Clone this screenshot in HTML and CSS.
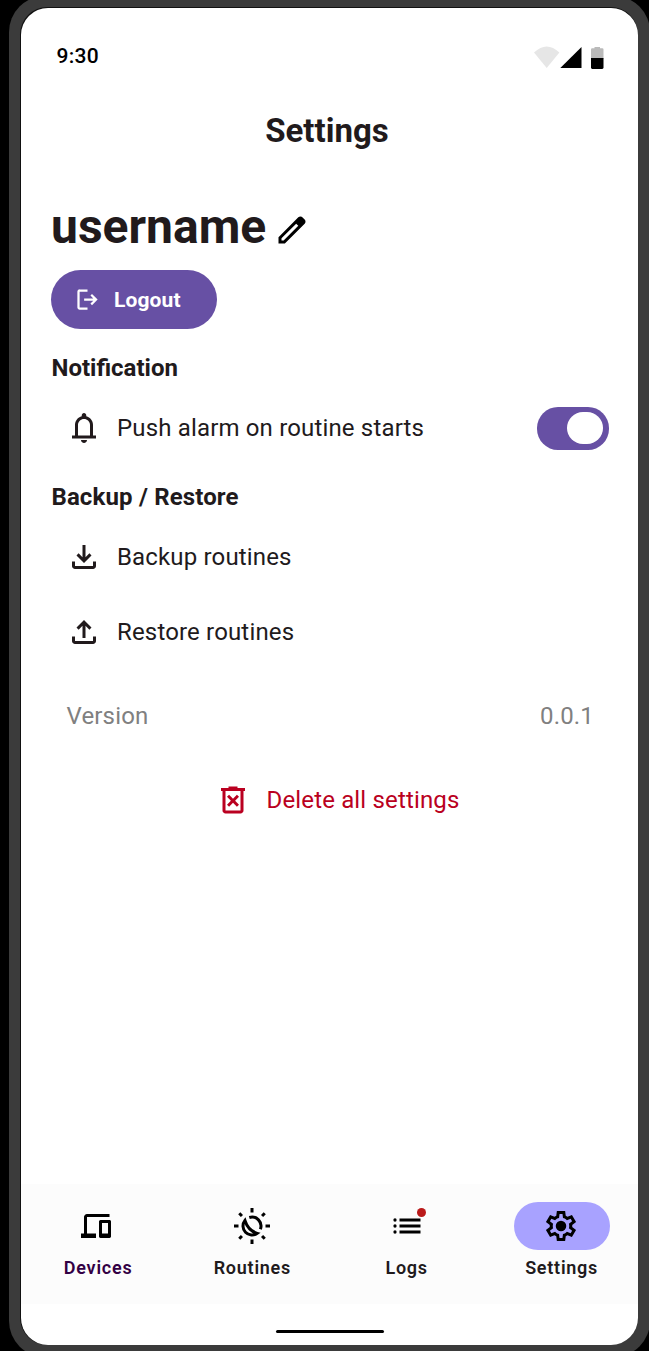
FILE: index.html
```html
<!DOCTYPE html>
<html lang="en">
<head>
<meta charset="utf-8">
<title>Settings</title>
<link rel="stylesheet" href="styles.css">
</head>
<body>
<div class="phone">
<div class="screen">
  <header class="status">
    <span class="time">9:30</span>
    <svg class="status-icons" viewBox="0 0 71 24">
      <path fill="#e6e6e6" d="M0 6.5Q12.7-5.5 25.4 6.5L12.7 22Z"/>
      <path d="M26.3 22 47.5 1V22Z"/>
      <path fill="#bababa" d="M57 13V3.5Q57 2.2 58.3 2.2H60.5V1H66V2.2H68.2Q69.5 2.2 69.5 3.5V13Z"/>
      <path d="M57 12H69.5V21.6Q69.5 23 68.2 23H58.3Q57 23 57 21.6Z"/>
    </svg>
  </header>
  <h1 class="title">Settings</h1>
  <main class="content">
    <div class="user">
      <h2 class="username">username</h2>
      <svg class="icon edit" viewBox="0 0 24 24"><path fill-rule="evenodd" d="M5 19h1.425L16.2 9.225 14.775 7.8 5 17.575V19Zm-2 2v-4.25L16.2 3.575c.2-.183.42-.325.663-.425a2.07 2.07 0 0 1 1.525 0c.25.1.467.25.65.45L20.425 5c.2.183.346.4.438.65a2.166 2.166 0 0 1 0 1.512 1.874 1.874 0 0 1-.438.663L7.25 21H3Z"/></svg>
    </div>
    <button class="logout">
      <svg class="logout-icon" viewBox="0 0 24 24"><path d="M5 21c-.55 0-1.02-.196-1.413-.587A1.926 1.926 0 0 1 3 19V5c0-.55.196-1.02.587-1.413A1.926 1.926 0 0 1 5 3h7v2H5v14h7v2H5Zm11-4-1.375-1.45 2.55-2.55H9v-2h8.175l-2.55-2.55L16 7l5 5-5 5Z"/></svg>
      <span class="logout-label">Logout</span>
    </button>
    <h3 class="heading">Notification</h3>
    <div class="row push">
      <svg class="icon" viewBox="0 0 24 24"><path d="M4 19v-2h2v-7c0-1.383.417-2.612 1.25-3.688.833-1.075 1.917-1.779 3.25-2.112v-.7c0-.417.146-.77.438-1.062A1.446 1.446 0 0 1 12 2c.417 0 .77.146 1.063.438.291.291.437.645.437 1.062v.7c1.333.333 2.417 1.037 3.25 2.112C17.583 7.388 18 8.617 18 10v7h2v2H4Zm8 3c-.55 0-1.02-.196-1.412-.587A1.926 1.926 0 0 1 10 20h4c0 .55-.196 1.02-.588 1.413A1.926 1.926 0 0 1 12 22Zm-4-5h8v-7c0-1.1-.392-2.042-1.175-2.825C14.042 6.392 13.1 6 12 6s-2.042.392-2.825 1.175C8.392 7.958 8 8.9 8 10v7Z"/></svg>
      <span class="label">Push alarm on routine starts</span>
      <span class="switch"><span class="knob"></span></span>
    </div>
    <h3 class="heading backup">Backup / Restore</h3>
    <div class="row">
      <svg class="icon" viewBox="0 0 24 24"><path d="m12 16-5-5 1.4-1.45 2.6 2.6V4h2v8.15l2.6-2.6L17 11l-5 5Zm-6 4c-.55 0-1.02-.196-1.412-.587A1.926 1.926 0 0 1 4 18v-3h2v3h12v-3h2v3c0 .55-.196 1.02-.587 1.413A1.926 1.926 0 0 1 18 20H6Z"/></svg>
      <span class="label">Backup routines</span>
    </div>
    <div class="row">
      <svg class="icon" viewBox="0 0 24 24"><path d="M11 16V7.85l-2.6 2.6L7 9l5-5 5 5-1.4 1.45-2.6-2.6V16h-2Zm-5 4c-.55 0-1.02-.196-1.412-.587A1.926 1.926 0 0 1 4 18v-3h2v3h12v-3h2v3c0 .55-.196 1.02-.587 1.413A1.926 1.926 0 0 1 18 20H6Z"/></svg>
      <span class="label">Restore routines</span>
    </div>
    <div class="version"><span>Version</span><span>0.0.1</span></div>
    <div class="delete">
      <svg class="icon" viewBox="0 0 24 24"><path d="m9.4 16.5 2.6-2.6 2.6 2.6 1.4-1.4-2.6-2.6L16 9.9l-1.4-1.4-2.6 2.6-2.6-2.6L8 9.9l2.6 2.6L8 15.1l1.4 1.4ZM7 21c-.55 0-1.02-.196-1.412-.587A1.926 1.926 0 0 1 5 19V6H4V4h5V3h6v1h5v2h-1v13c0 .55-.196 1.02-.587 1.413A1.926 1.926 0 0 1 17 21H7ZM17 6H7v13h10V6Z"/></svg>
      <span>Delete all settings</span>
    </div>
  </main>
  <nav class="nav">
    <a class="item devices">
      <span class="pill"><svg class="icon" viewBox="0 0 24 24"><path d="M2 20v-3h2V6c0-.55.196-1.02.588-1.412A1.926 1.926 0 0 1 6 4h15v2H6v11h6v3H2Zm13 0c-.283 0-.52-.096-.713-.287A.968.968 0 0 1 14 19V9c0-.283.096-.52.287-.713A.968.968 0 0 1 15 8h6c.283 0 .52.096.712.287.192.192.288.43.288.713v10c0 .283-.096.52-.288.713A.968.968 0 0 1 21 20h-6Zm1-3h4v-7h-4v7Z"/></svg></span>
      <span>Devices</span>
    </a>
    <a class="item">
      <span class="pill"><svg class="icon line" viewBox="-12 -12 24 24">
        <path d="M0-12V-9M0 9V12M-12 0H-9M9 0H12M-8.5-8.5-6.7-6.7M8.5-8.5 6.7-6.7M-8.5 8.5-6.7 6.7M8.5 8.5 6.7 6.7"/>
        <path d="M-1.8-5.7A6 6 0 0 1 5.6 2.1"/>
        <path d="M-4.7-3.7A6 6 0 0 0 3.5 4.9Q-2.6 3-4.7-3.7Z"/>
      </svg></span>
      <span>Routines</span>
    </a>
    <a class="item">
      <span class="pill"><svg class="icon" viewBox="0 0 24 24"><path d="M7 9V7h14v2H7Zm0 4v-2h14v2H7Zm0 4v-2h14v2H7Z"/><circle cx="4" cy="8" r="1.1"/><circle cx="4" cy="12" r="1.1"/><circle cx="4" cy="16" r="1.1"/></svg><span class="badge"></span></span>
      <span>Logs</span>
    </a>
    <a class="item active">
      <span class="pill"><svg class="icon" viewBox="0 0 24 24"><path d="m9.25 22-.4-3.2a3.77 3.77 0 0 1-.612-.3 8.2 8.2 0 0 1-.563-.375L4.7 19.375l-2.75-4.75 2.575-1.95A2.387 2.387 0 0 1 4.5 12.337v-.675c0-.108.008-.22.025-.337L1.95 9.375l2.75-4.75 2.975 1.25c.183-.133.375-.258.575-.375.2-.117.4-.217.6-.3l.4-3.2h5.5l.4 3.2c.217.083.42.183.612.3.192.117.38.242.563.375l2.975-1.25 2.75 4.75-2.575 1.95c.017.117.025.23.025.337v.675c0 .109-.017.221-.05.338l2.575 1.95-2.75 4.75-2.95-1.25a6.935 6.935 0 0 1-.575.375c-.2.117-.4.217-.6.3l-.4 3.2h-5.5ZM11 20h1.975l.35-2.65a5.87 5.87 0 0 0 1.438-.587 6.05 6.05 0 0 0 1.187-.913l2.475 1.025.975-1.7-2.15-1.625c.083-.233.142-.48.175-.737a6.187 6.187 0 0 0 0-1.625 3.39 3.39 0 0 0-.175-.738l2.15-1.625-.975-1.7-2.475 1.05a5.554 5.554 0 0 0-1.187-.962 5.87 5.87 0 0 0-1.438-.588L13 4h-1.975l-.35 2.65c-.517.133-.996.33-1.437.587a6.05 6.05 0 0 0-1.188.913L5.575 7.125l-.975 1.7 2.15 1.6a4.55 4.55 0 0 0-.175.75 6.6 6.6 0 0 0 0 1.638c.033.258.092.504.175.737L4.6 15.175l.975 1.7 2.475-1.05c.367.383.763.704 1.188.963.441.258.92.454 1.437.587L11 20Z" fill-rule="evenodd"/><circle cx="12" cy="12" r="3.5"/></svg></span>
      <span>Settings</span>
    </a>
  </nav>
  <footer class="gesture"><span class="bar"></span></footer>
</div>
</div>
</body>
</html>
```

FILE: styles.css
```css
* { box-sizing: border-box; }
html, body { height: 100%; }
body {
  margin: 0;
  overflow: hidden;
  background: #000;
  font-family: Roboto, "Liberation Sans", sans-serif;
  color: #211a1c;
}
h1, h2, h3 { margin: 0; }
.phone {
  width: 641px;
  height: 1361px;
  margin: -4px 0 0 9px;
  padding: 12px;
  border-radius: 36px;
  background: #3b3b3b;
}
.screen {
  width: 617px;
  height: 1337px;
  display: flex;
  flex-direction: column;
  background: #fff;
  border-radius: 27px;
  box-shadow: -.5px -.5px 0 .5px #111;
  overflow: hidden;
}
.status {
  height: 78px;
  padding: 18px 33.5px 0 35.5px;
  display: flex;
  align-items: center;
  justify-content: space-between;
  color: #000;
}
.time { font-size: 21px; font-weight: 500; letter-spacing: .3px; }
.status-icons { width: 71px; height: 24px; margin-top: 4px; }
.title {
  height: 90px;
  line-height: 90px;
  padding-right: 5px;
  text-align: center;
  font-size: 33px;
  font-weight: 700;
}
.content { flex: 1; padding: 18px 29.5px 0; }
.user { height: 75.5px; padding-left: .5px; display: flex; align-items: flex-start; }
.username { font-size: 48px; line-height: 66px; font-weight: 700; }
.icon { width: 36px; height: 36px; flex: none; display: block; fill: currentColor; }
.line { fill: none; stroke: #000; stroke-width: 2; }
.edit { margin: 17.5px 0 0 8px; fill: #000; }
.logout {
  width: 166.5px;
  height: 59.5px;
  padding: 0 0 0 23px;
  border: 0;
  border-radius: 30px;
  display: flex;
  align-items: center;
  gap: 13.5px;
  background: #6750a4;
  color: #fff;
  font: 700 21px Roboto, sans-serif;
  letter-spacing: .12px;
}
.logout-icon { width: 27px; height: 27px; fill: #fff; }
.logout-label { padding-top: 1.5px; }
.heading {
  height: 78px;
  line-height: 78px;
  font-size: 24px;
  font-weight: 700;
  font-variant-ligatures: common-ligatures;
  letter-spacing: 0;
  word-spacing: .3px;
  padding-left: 1px;
}
.row {
  height: 75px;
  padding: 0 0 0 15px;
  display: flex;
  align-items: center;
  gap: 15.5px;
  font-size: 24px;
  letter-spacing: .16px;
}
.push { height: 42.5px; }
.label { flex: 1; }
.switch {
  width: 72px;
  height: 42.5px;
  padding: 0 6px;
  border-radius: 21px;
  background: #6750a4;
  display: flex;
  align-items: center;
  justify-content: flex-end;
}
.knob { width: 36px; height: 32px; border-radius: 16px; background: #fff; }
.backup { height: 70px; line-height: 95px; letter-spacing: .1px; }
.version {
  height: 93px;
  padding: 0 14.5px 0 16px;
  display: flex;
  align-items: center;
  justify-content: space-between;
  color: #808080;
  font-size: 24px;
  letter-spacing: .16px;
}
.delete {
  height: 75px;
  padding-left: 16px;
  display: flex;
  align-items: center;
  justify-content: center;
  gap: 15px;
  color: #ba0020;
  font-size: 24px;
  letter-spacing: .16px;
}
.nav {
  height: 120px;
  padding: 18px 0 0;
  display: grid;
  grid-template-columns: repeat(4, 1fr);
  background: #fcfcfc;
}
.item {
  display: flex;
  flex-direction: column;
  align-items: center;
  gap: 6px;
  font-size: 18px;
  line-height: 24px;
  font-weight: 600;
  letter-spacing: .75px;
}
.pill {
  position: relative;
  width: 96px;
  height: 48px;
  border-radius: 24px;
  display: flex;
  align-items: center;
  justify-content: center;
  color: #000;
}
.active { padding-left: 1.5px; }
.active .pill { background: #a8a2ff; padding-right: 1px; }
.devices { color: #330044; }
.devices .pill { padding-right: 5px; }
.badge {
  position: absolute;
  left: 58px;
  top: 6px;
  width: 9px;
  height: 9px;
  border-radius: 50%;
  background: #ba1a1a;
}
.gesture { height: 41.5px; display: flex; justify-content: center; padding-top: 26px; }
.bar { width: 108px; height: 3px; border-radius: 2px; background: #000; }
```
